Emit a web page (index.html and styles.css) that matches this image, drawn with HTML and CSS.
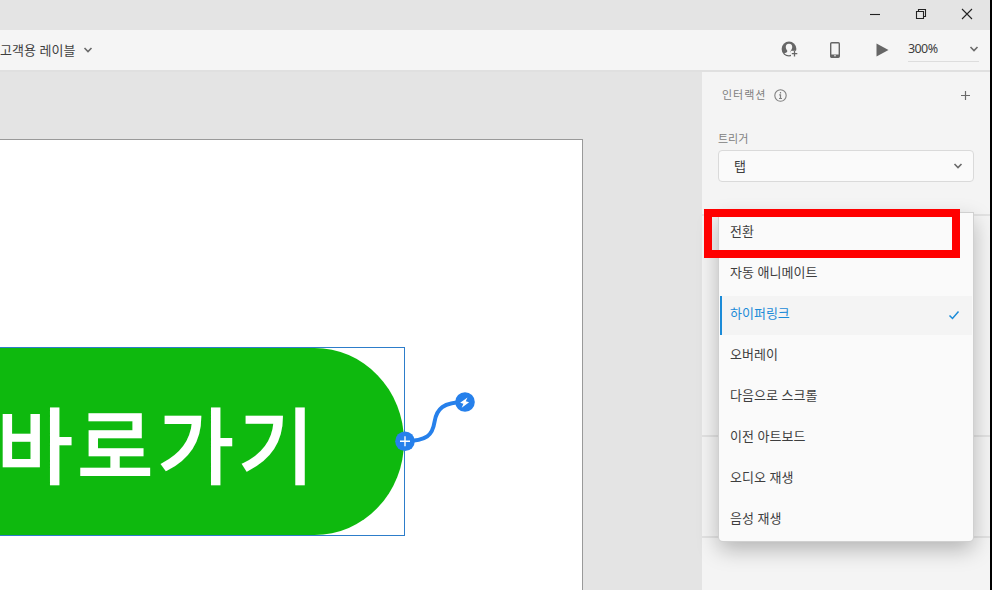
FILE: index.html
```html
<!DOCTYPE html>
<html lang="ko">
<head>
<meta charset="utf-8">
<title>고객용 레이블</title>
<link rel="stylesheet" href="styles.css">
</head>
<body>
<div class="window">
  <header class="titlebar">
    <svg class="win-icon" viewBox="0 0 12 12"><path d="M1 6.5h10"/></svg>
    <svg class="win-icon" viewBox="0 0 12 12"><path d="M1.5 3.5h7v7h-7zM3.5 3.5v-2h7v7h-2"/></svg>
    <svg class="win-icon" viewBox="0 0 12 12"><path d="M1 1l10 10M11 1L1 11"/></svg>
  </header>
  <div class="toolbar">
    <div class="doc"><span>고객용 레이블</span><svg class="chevron" viewBox="0 0 10 6"><path d="M1.5 1l3.500 3.500L8.500 1"/></svg></div>
    <div class="tools">
      <svg class="share" viewBox="0 0 18 18">
        <circle cx="8" cy="8" r="7.400" fill="#666"/>
        <path d="M8 2.800c-2.300 0-3.500 1.600-3.200 3.800.2 1.400.8 2.400 1.500 3.200 0 1-.3 1.400-1 1.700l-2 1A7 7 0 0 0 8 14.200l2-.4v-2.300c-.4-.3-.4-.8-.3-1.700.7-.8 1.300-1.800 1.500-3.200.3-2.200-.9-3.800-3.200-3.800z" fill="#f5f5f5"/>
        <path d="M10 9.800h7v7h-7z" fill="#f5f5f5"/>
        <path d="M13.500 10v5.500M10.800 12.700h5.500" stroke="#666" stroke-width="1.300"/>
      </svg>
      <svg class="phone" viewBox="0 0 10 16"><rect x=".7" y=".7" width="8.600" height="14.600" rx="1" fill="#f5f5f5" stroke="#666" stroke-width="1.400"/><path d="M1 12.500h8V15H1z" fill="#666"/><circle cx="5" cy="13.700" r=".8" fill="#f5f5f5"/></svg>
      <svg class="play" viewBox="0 0 13 14"><path d="M.5.500L12.500 7 .5 13.500z" fill="#666"/></svg>
      <div class="zoom"><span>300%</span><svg class="chevron" viewBox="0 0 10 6"><path d="M1.500 1l3.500 3.500L8.500 1"/></svg></div>
    </div>
  </div>
  <div class="workspace">
    <main class="canvas">
      <div class="artboard">
        <div class="selection"><div class="pill">바로가기</div></div>
        <svg class="wire" viewBox="0 0 90 60">
          <path d="M12 48C34 48 39.500 42 41.500 29S50 9 72 9" fill="none" stroke="#2680eb" stroke-width="4"/>
          <circle cx="12" cy="48.300" r="9.800" fill="#2680eb"/>
          <path d="M12 43.300v10M7 48.300h10" stroke="#fff" stroke-width="1.400"/>
          <circle cx="72" cy="9" r="9.800" fill="#2680eb"/>
          <path d="M74.500 4.500l-7.300 5.300 3.200 1-1.700 4 7.400-5.500-3.300-1z" fill="#fff"/>
        </svg>
      </div>
    </main>
    <aside class="panel">
      <section class="interaction">
        <div class="heading"><span>인터랙션</span>
          <svg class="info" viewBox="0 0 13 13"><circle cx="6.500" cy="6.500" r="5.700" fill="none" stroke="#808080" stroke-width="1.100"/><path d="M6.500 3v1.500M5.200 5.800h1.300v3.700M5 9.500h3" fill="none" stroke="#808080" stroke-width="1.200"/></svg>
          <svg class="plus" viewBox="0 0 9 9"><path d="M4.500 0v9M0 4.500h9" stroke="#6a6a6a" stroke-width="1.200"/></svg>
        </div>
        <div class="label">트리거</div>
        <div class="select"><span>탭</span><svg class="chevron" viewBox="0 0 10 6"><path d="M1.500 1l3.500 3.500L8.500 1"/></svg></div>
      </section>
      <section class="action"></section>
      <section class="target"></section>
      <ul class="menu">
        <li>전환</li>
        <li>자동 애니메이트</li>
        <li class="selected">하이퍼링크<svg class="check" viewBox="0 0 12 10"><path d="M1.500 5.500l3 3 6-7"/></svg></li>
        <li>오버레이</li>
        <li>다음으로 스크롤</li>
        <li>이전 아트보드</li>
        <li>오디오 재생</li>
        <li>음성 재생</li>
      </ul>
      <div class="highlight"></div>
    </aside>
  </div>
</div>
</body>
</html>
```
FILE: styles.css
```css
* { box-sizing: border-box; }
body {
  margin: 0;
  overflow: hidden;
  font-family: "Noto Sans CJK KR", sans-serif;
  font-size: 13px;
  color: #3e3e3e;
}
svg { display: block; flex: none; }
.window {
  width: 992px;
  height: 590px;
  display: flex;
  flex-direction: column;
  background: #e4e4e4;
  border-right: 2px solid #000;
}
.titlebar {
  height: 30px;
  display: flex;
  justify-content: flex-end;
  align-items: center;
  gap: 34px;
  padding: 0 17px 2px 0;
}
.win-icon { width: 12px; height: 12px; fill: none; stroke: #222; stroke-width: 1.1; }
.toolbar {
  height: 40px;
  display: flex;
  justify-content: space-between;
  background: #f5f5f5;
}
.doc { display: flex; align-items: center; gap: 8px; height: 40px; }
.doc span { padding-bottom: 2px; }
.chevron { width: 10px; height: 6px; fill: none; stroke: #6a6a6a; stroke-width: 1.6; }
.tools { display: flex; align-items: center; padding-right: 11px; }
.share { width: 18px; height: 18px; margin: 0 31px 0 0; }
.phone { width: 10px; height: 16px; margin: 0 36px 0 0; }
.play { width: 13px; height: 14px; margin: 0 19px 0 0; }
.zoom {
  width: 71px;
  height: 26px;
  display: flex;
  align-items: center;
  justify-content: space-between;
  align-self: flex-start;
  margin-top: 6px;
  border-bottom: 1px solid #ddd;
  font: 12.5px "Noto Sans", sans-serif;
}
.zoom span { letter-spacing: -.6px; }
.workspace { flex: 1; min-height: 0; display: flex; border-top: 2px solid #e0e0e0; }
.canvas { width: 702px; padding-top: 67px; overflow: hidden; }
.artboard {
  position: relative;
  width: 583px;
  height: 460px;
  padding-top: 207px;
  background: #fff;
  border: solid #999;
  border-width: 1px 1px 0 0;
}
.selection {
  width: 405px;
  height: 189px;
  border: solid #2d7dca;
  border-width: 1px 1px 1px 0;
}
.pill {
  height: 187px;
  display: flex;
  align-items: center;
  text-indent: -3px;
  background: #0eb90e;
  border-radius: 0 90px 90px 0 / 0 94px 94px 0;
  color: #fff;
  font-size: 82px;
  letter-spacing: 5.1px;
  -webkit-text-stroke: 2.6px #fff;
  line-height: 1;
  white-space: nowrap;
}
.wire { position: absolute; left: 393px; top: 253px; width: 90px; height: 60px; overflow: visible; }
.panel { position: relative; flex: 1; background: #f4f4f4; }
.panel section { border-bottom: 2px solid #e2e2e2; }
.interaction { height: 144px; padding: 12px 16px 0; }
.action { height: 221px; }
.target { height: 101px; }
.heading { display: flex; align-items: center; height: 22px; padding: 0 4px 0 4px; font-size: 11px; letter-spacing: 1px; color: #808080; }
.heading span { padding-bottom: 2px; }
.info { width: 13px; height: 13px; margin-left: 8px; }
.plus { width: 9px; height: 9px; margin-left: auto; }
.label { height: 20px; margin-top: 24px; line-height: 16px; font-size: 11px; color: #808080; }
.select {
  height: 32px;
  display: flex;
  align-items: center;
  justify-content: space-between;
  padding: 0 10px 0 15px;
  background: #fafafa;
  border: 1px solid #dadada;
  border-radius: 4px;
}
.select span { padding-bottom: 2px; }
.menu {
  position: absolute;
  left: 17px;
  top: 141px;
  width: 254px;
  margin: 0;
  padding: 0;
  list-style: none;
  background: #fafafa;
  border-radius: 0 0 4px 4px;
  box-shadow: 0 0 0 1px #d0d0d0, 0 8px 22px rgba(0, 0, 0, .28);
}
.menu li {
  display: flex;
  align-items: center;
  justify-content: space-between;
  height: 41px;
  padding: 0 13px 6px 11px;
}
.menu .selected {
  height: 39px;
  margin: 1px;
  padding: 0 12px 6px 8px;
  border-left: 2px solid #1b8bd8;
  background: #f4f4f4;
  color: #1b8bd8;
}
.check { width: 12px; height: 10px; margin-top: 5px; fill: none; stroke: #1b8bd8; stroke-width: 1.5; }
.highlight {
  position: absolute;
  left: 2px;
  top: 137px;
  width: 256px;
  height: 49px;
  border: 8px solid #f00;
}
```
